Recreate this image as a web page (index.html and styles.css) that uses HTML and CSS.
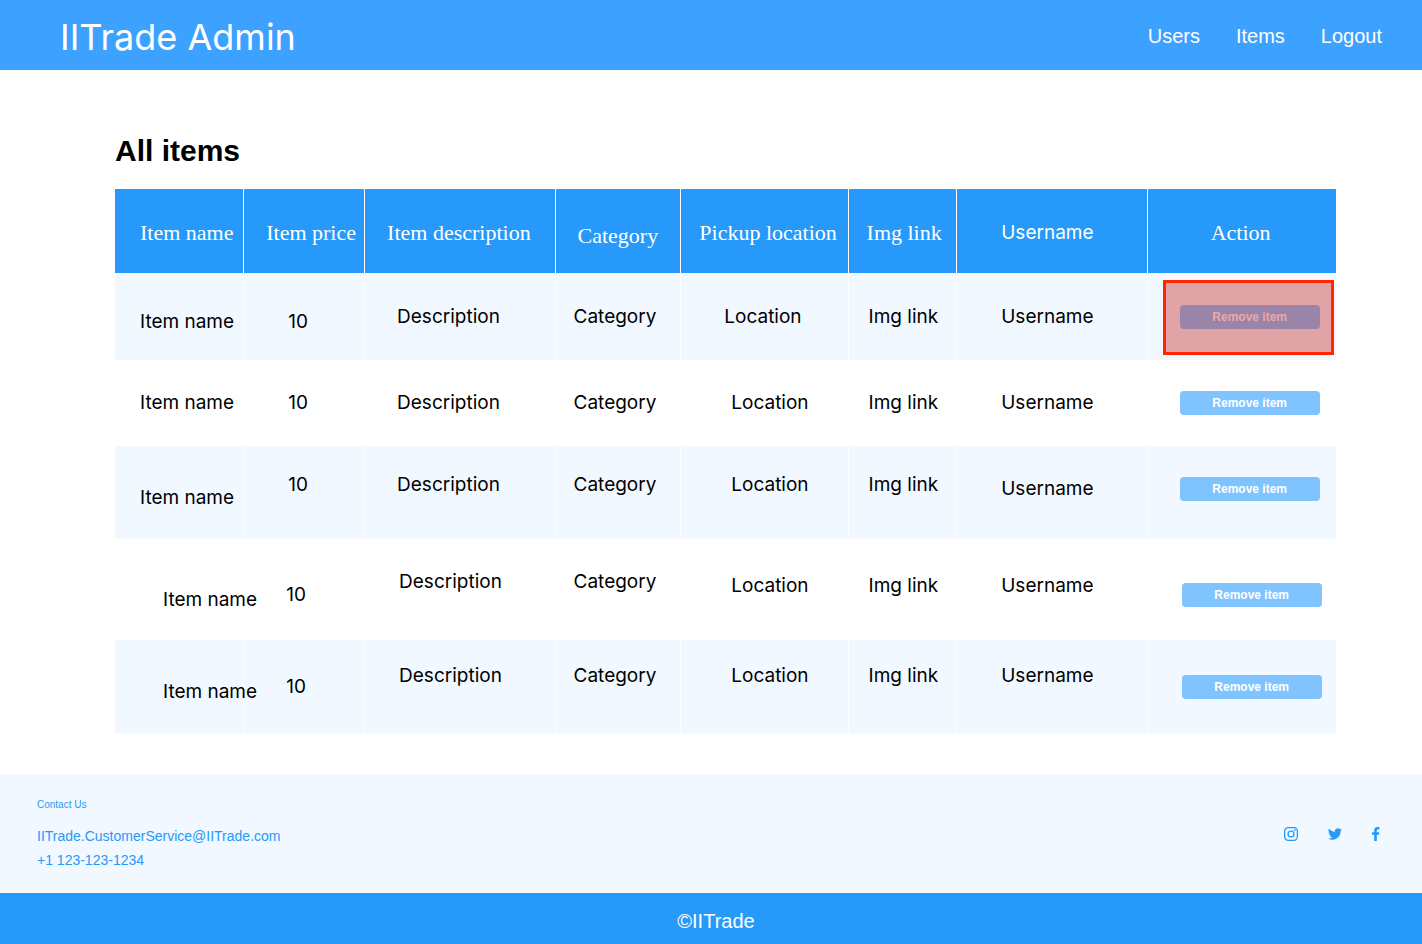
FILE: index.html
```html
<!DOCTYPE html>
<html lang="en">
<head>
<meta charset="utf-8">
<meta name="viewport" content="width=device-width, initial-scale=1">
<title>IITrade Admin</title>
<link rel="stylesheet" href="styles.css">
</head>
<body>
<header class="topbar">
  <div class="brand">IITrade Admin</div>
  <nav class="nav">
    <a href="#users">Users</a>
    <a href="#items">Items</a>
    <a href="#logout">Logout</a>
  </nav>
</header>

<main class="content">
  <h1 class="title">All items</h1>
  <table class="items">
    <colgroup>
      <col class="w-name"><col class="w-price"><col class="w-desc"><col class="w-cat"><col class="w-loc"><col class="w-img"><col class="w-user"><col class="w-action">
    </colgroup>
    <thead>
      <tr>
        <th scope="col" class="name">Item name</th>
        <th scope="col">Item price</th>
        <th scope="col">Item description</th>
        <th scope="col" class="drop">Category</th>
        <th scope="col" class="pickup">Pickup location</th>
        <th scope="col" class="pickup">Img link</th>
        <th scope="col" class="user">Username</th>
        <th scope="col" class="action-head">Action</th>
      </tr>
    </thead>
    <tbody>
      <tr class="row-first tinted">
        <td class="name drop">Item name</td>
        <td class="price drop">10</td>
        <td class="desc">Description</td>
        <td class="cat">Category</td>
        <td class="loc-near">Location</td>
        <td class="img">Img link</td>
        <td class="user">Username</td>
        <td class="action selected"><button type="button" class="remove">Remove item</button></td>
      </tr>
      <tr class="row-short">
        <td class="name">Item name</td>
        <td class="price">10</td>
        <td class="desc">Description</td>
        <td class="cat">Category</td>
        <td class="loc">Location</td>
        <td class="img">Img link</td>
        <td class="user">Username</td>
        <td class="action"><button type="button" class="remove">Remove item</button></td>
      </tr>
      <tr class="row-mid tinted">
        <td class="name drop">Item name</td>
        <td class="price lift-more">10</td>
        <td class="desc lift-more">Description</td>
        <td class="cat lift-more">Category</td>
        <td class="loc lift-more">Location</td>
        <td class="img lift-more">Img link</td>
        <td class="user lift">Username</td>
        <td class="action lift"><button type="button" class="remove">Remove item</button></td>
      </tr>
      <tr class="row-tall indented">
        <td class="name drop-more">Item name</td>
        <td class="price drop">10</td>
        <td class="desc lift-more">Description</td>
        <td class="cat lift-more">Category</td>
        <td class="loc lift">Location</td>
        <td class="img lift">Img link</td>
        <td class="user lift">Username</td>
        <td class="action drop"><button type="button" class="remove">Remove item</button></td>
      </tr>
      <tr class="row-mid tinted indented">
        <td class="name drop">Item name</td>
        <td class="price">10</td>
        <td class="desc lift-most">Description</td>
        <td class="cat lift-most">Category</td>
        <td class="loc lift-most">Location</td>
        <td class="img lift-most">Img link</td>
        <td class="user lift-most">Username</td>
        <td class="action"><button type="button" class="remove">Remove item</button></td>
      </tr>
    </tbody>
  </table>
</main>

<footer>
  <div class="contact">
    <address class="details">
      <p class="contact-label">Contact Us</p>
      <a href="mailto:IITrade.CustomerService@IITrade.com">IITrade.CustomerService@IITrade.com</a>
      <a href="tel:+11231231234">+1 123-123-1234</a>
    </address>
    <div class="social">
      <a href="#instagram" aria-label="Instagram">
        <svg width="14" height="14" viewBox="0 0 14 14" fill="none" stroke="currentColor"><rect x=".65" y=".65" width="12.7" height="12.7" rx="3.5" stroke-width="1.3"/><circle cx="7" cy="7" r="2.95" stroke-width="1.3"/><circle cx="10.8" cy="3.2" r=".85" fill="currentColor" stroke="none"/></svg>
      </a>
      <a href="#twitter" aria-label="Twitter">
        <svg width="14" height="14" viewBox="0 0 24 24" fill="currentColor"><path d="M24 4.6a10 10 0 0 1-2.8.8 5 5 0 0 0 2.1-2.7 10 10 0 0 1-3.1 1.2 4.9 4.9 0 0 0-8.4 4.5A14 14 0 0 1 1.700 3.200a4.900 4.900 0 0 0 1.500 6.600 5 5 0 0 1-2.200-.6 4.900 4.900 0 0 0 3.900 4.900 5 5 0 0 1-2.200.1 4.900 4.900 0 0 0 4.600 3.400A9.900 9.900 0 0 1 0 19.500a14 14 0 0 0 21.500-12.400A10 10 0 0 0 24 4.600z"/></svg>
      </a>
      <a href="#facebook" aria-label="Facebook">
        <svg width="8" height="14" viewBox="0 0 8 14" fill="currentColor"><path d="M2.200 14V7.700H0V5.200h2.200V3.300C2.200 1.200 3.500 0 5.400 0c.9 0 1.700.1 1.900.1v2.300H6c-1 0-1.200.5-1.200 1.200v1.600h2.500L7 7.700H4.800V14z"/></svg>
      </a>
    </div>
  </div>
  <div class="copyright">©IITrade</div>
</footer>
</body>
</html>
```

FILE: styles.css
```css
* {
  box-sizing: border-box;
}

body {
  margin: 0;
  min-height: 100vh;
  display: flex;
  flex-direction: column;
  background: #fff;
  color: #000;
  font-family: "Liberation Sans", Arial, sans-serif;
  font-size: 20px;
}

a {
  color: inherit;
  text-decoration: none;
}

.topbar {
  display: flex;
  align-items: center;
  justify-content: space-between;
  padding: 2px 40px 0 60px;
  background: #3da1ff;
  color: #fff;
}

.brand {
  padding: 3px 0 1px;
  font-family: Inter, sans-serif;
  font-size: 36px;
  font-weight: 400;
  line-height: 64px;
}

.nav {
  display: flex;
  gap: 36px;
}

.content {
  flex: 1;
  padding: 61px 86px 41px 115px;
}

.title {
  margin: 0 0 18px;
  font-size: 30px;
  line-height: 40px;
}

.items {
  width: 100%;
  table-layout: fixed;
  border-collapse: separate;
  border-spacing: 0;
  font-family: Inter, sans-serif;
  font-size: 19px;
  line-height: 24px;
  text-align: left;
  white-space: nowrap;
}

.w-name { width: 10.5%; }
.w-price { width: 9.9%; }
.w-desc { width: 15.6%; }
.w-cat { width: 10.3%; }
.w-loc { width: 13.7%; }
.w-img { width: 8.9%; }
.w-user { width: 15.6%; }
.w-action { width: 15.5%; }

th,
td {
  padding: 0;
  vertical-align: middle;
}

th + th,
td + td {
  border-left: 1px solid #fff;
}

th {
  height: 84px;
  padding: 4px 0 0 22px;
  background: #2699fb;
  color: #fff;
  font-family: "Liberation Serif", Georgia, serif;
  font-size: 22px;
  font-weight: 400;
}

th.user {
  font-family: Inter, sans-serif;
  font-size: 19px;
}

.row-first { height: 87px; }
.row-short { height: 86px; }
.row-mid { height: 93px; }
.row-tall { height: 101px; }
.tinted { background: #f1f8ff; }

.name { padding-left: 25px; }
.price { padding-left: 44px; }
.desc { padding-left: 32px; }
.cat { padding-left: 18px; }
.loc { padding-left: 50px; }
.loc-near { padding-left: 43px; }
.img { padding-left: 20px; }
.user { padding-left: 44px; }
.action { padding-left: 32px; }
.pickup { padding-left: 18px; }
.action-head { padding-left: 63px; }

.indented .name { padding-left: 48px; }
.indented .price { padding-left: 42px; }
.indented .desc { padding-left: 34px; }
.indented .action { padding-left: 34px; }

.drop { padding-top: 10px; }
.drop-more { padding-top: 20px; }
.lift { padding-bottom: 8px; }
.lift-more { padding-bottom: 16px; }
.lift-most { padding-bottom: 22px; }

.remove {
  display: block;
  width: 140px;
  height: 24px;
  padding: 0;
  border: 0;
  border-radius: 4px;
  background: #7fc4ff;
  color: #fff;
  font: bold 12px/24px "Liberation Sans", Arial, sans-serif;
  cursor: pointer;
}

.selected {
  position: relative;
}

.selected::after {
  content: "";
  position: absolute;
  inset: 7px 2px 5px 15px;
  border: 3px solid #ff2600;
  background: rgba(199, 30, 29, 0.39);
  pointer-events: none;
}

.contact {
  display: flex;
  align-items: center;
  justify-content: space-between;
  padding: 21px 42px 21px 37px;
  background: #f1f8ff;
  color: #2699fb;
}

.details {
  display: flex;
  flex-direction: column;
  font-size: 14px;
  font-style: normal;
  line-height: 24px;
}

.contact-label {
  margin: 0 0 9px;
  font-size: 10px;
  line-height: 20px;
}

.social {
  display: flex;
  gap: 30px;
}

.social a,
.social svg {
  display: block;
}

.copyright {
  padding: 16px 0 11px 10px;
  background: #2699fb;
  color: #fff;
  line-height: 24px;
  text-align: center;
}
```
